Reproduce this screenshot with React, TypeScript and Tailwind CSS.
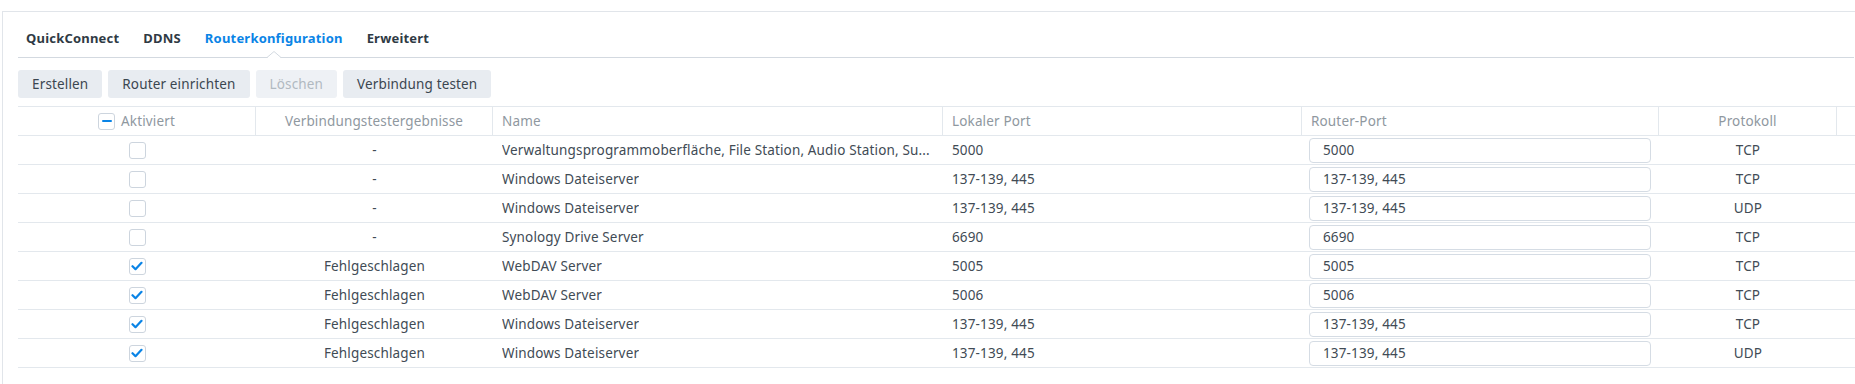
const rows = [
  { on: false, test: "-", name: "Verwaltungsprogrammoberfläche, File Station, Audio Station, Su...", local: "5000", router: "5000", proto: "TCP" },
  { on: false, test: "-", name: "Windows Dateiserver", local: "137-139, 445", router: "137-139, 445", proto: "TCP" },
  { on: false, test: "-", name: "Windows Dateiserver", local: "137-139, 445", router: "137-139, 445", proto: "UDP" },
  { on: false, test: "-", name: "Synology Drive Server", local: "6690", router: "6690", proto: "TCP" },
  { on: true, test: "Fehlgeschlagen", name: "WebDAV Server", local: "5005", router: "5005", proto: "TCP" },
  { on: true, test: "Fehlgeschlagen", name: "WebDAV Server", local: "5006", router: "5006", proto: "TCP" },
  { on: true, test: "Fehlgeschlagen", name: "Windows Dateiserver", local: "137-139, 445", router: "137-139, 445", proto: "TCP" },
  { on: true, test: "Fehlgeschlagen", name: "Windows Dateiserver", local: "137-139, 445", router: "137-139, 445", proto: "UDP" },
];

const tabs = ["QuickConnect", "DDNS", "Routerkonfiguration", "Erweitert"];

const cols = "grid grid-cols-[238px_237px_450px_359px_357px_178px_1fr]";

function Checkbox({ checked, partial }: { checked?: boolean; partial?: boolean }) {
  return (
    <span className="w-[17px] h-[17px] rounded-[3px] border border-[#cdd5de] bg-white flex items-center justify-center shrink-0">
      {checked && (
        <svg width="12" height="10" viewBox="0 0 12 10" fill="none">
          <path d="M1.5 5.2l3 3 6-6.4" stroke="#0a84e6" strokeWidth="2.2" strokeLinecap="round" strokeLinejoin="round" />
        </svg>
      )}
      {partial && <span className="w-[10px] h-[2px] bg-[#0a84e6] rounded-full" />}
    </span>
  );
}

export default function App() {
  return (
    <div className="w-[1855px] h-[384px] overflow-hidden bg-white font-['Noto_Sans',sans-serif] text-[13.5px] tracking-[0.15px] text-[#414b55] pl-[2px] pt-[11px]">
      <div className="h-full border-l border-t border-[#e1e5ea] pl-[15px]">
        {/* tabs */}
        <div className="mr-[1px] h-[46px] border-b border-[#d3d9e0] flex items-center gap-[24px] pl-[8px] pt-[8px]">
          {tabs.map((t) => (
            <div
              key={t}
              className={`relative h-full flex items-center font-bold text-[13px] tracking-[0.2px] ${t === "Routerkonfiguration" ? "text-[#0a84e6]" : "text-[#2f3a44]"}`}
            >
              {t}
              {t === "Routerkonfiguration" && (
                <svg className="absolute left-1/2 -translate-x-1/2 bottom-[-1px]" width="14" height="7" viewBox="0 0 14 7">
                  <polygon points="0,7 7,1 14,7" fill="#fff" />
                  <polyline points="0,6.5 7,0.5 14,6.5" fill="none" stroke="#d3d9e0" />
                </svg>
              )}
            </div>
          ))}
        </div>

        {/* toolbar */}
        <div className="flex gap-[6px] mt-[12px]">
          <button className="h-[28px] px-[14px] rounded-[3px] bg-[#e8ecf1] text-[#3b4650]">Erstellen</button>
          <button className="h-[28px] px-[14px] rounded-[3px] bg-[#e8ecf1] text-[#3b4650]">Router einrichten</button>
          <button className="h-[28px] px-[14px] rounded-[3px] bg-[#eef1f5] text-[#b1b9c1]">Löschen</button>
          <button className="h-[28px] px-[14px] rounded-[3px] bg-[#e8ecf1] text-[#3b4650]">Verbindung testen</button>
        </div>

        {/* grid */}
        <div className="mt-[8px]">
          <div className={`${cols} h-[30px] border-y border-[#e3e8ed] text-[#8f989f]`}>
            <div className="flex items-center justify-center gap-[6px] border-r border-[#e3e8ed]">
              <Checkbox partial />
              <span>Aktiviert</span>
            </div>
            <div className="flex items-center justify-center border-r border-[#e3e8ed]">Verbindungstestergebnisse</div>
            <div className="flex items-center px-[9px] border-r border-[#e3e8ed]">Name</div>
            <div className="flex items-center px-[9px] border-r border-[#e3e8ed]">Lokaler Port</div>
            <div className="flex items-center px-[9px] border-r border-[#e3e8ed]">Router-Port</div>
            <div className="flex items-center justify-center border-r border-[#e3e8ed]">Protokoll</div>
            <div />
          </div>
          {rows.map((r, i) => (
            <div key={i} className={`${cols} h-[29px] border-b border-[#e3e8ed]`}>
              <div className="flex items-center justify-center">
                <Checkbox checked={r.on} />
              </div>
              <div className="flex items-center justify-center">{r.test}</div>
              <div className="flex items-center px-[9px] min-w-0">
                <span className="truncate">{r.name}</span>
              </div>
              <div className="flex items-center px-[9px]">{r.local}</div>
              <div className="flex items-center pl-[7px] pr-[8px]">
                <div className="w-full h-[25px] rounded-[4px] border border-[#d5dce4] flex items-center pl-[13px]">
                  {r.router}
                </div>
              </div>
              <div className="flex items-center justify-center">{r.proto}</div>
              <div />
            </div>
          ))}
        </div>
      </div>
    </div>
  );
}
